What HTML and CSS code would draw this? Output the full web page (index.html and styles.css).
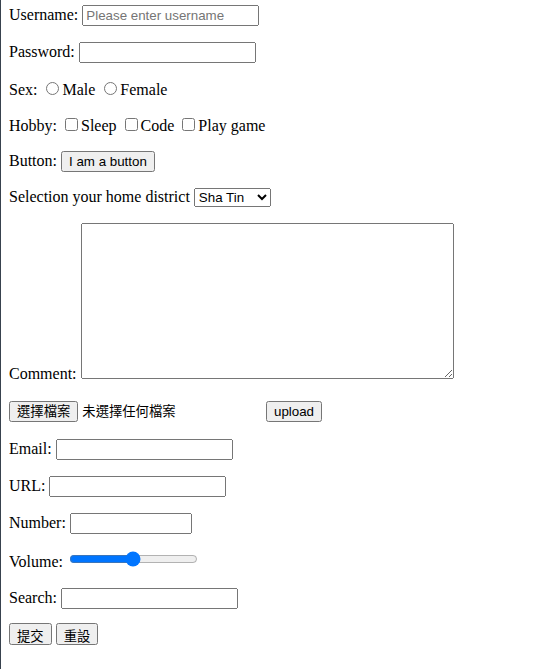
FILE: index.html
```html
<!DOCTYPE html>
<html lang="zh-Hant">
<head>
<meta charset="utf-8">
<title>Form</title>
<link rel="stylesheet" href="styles.css">
</head>
<body>
<form class="form">
  <p class="row first">Username: <input class="field" type="text" placeholder="Please enter username"></p>
  <p class="row">Password: <input class="field" type="password"></p>
  <p class="row">Sex: <input class="radio" type="radio" name="sex" id="male"><label for="male">Male</label> <input class="radio" type="radio" name="sex" id="female"><label for="female">Female</label></p>
  <p class="row">Hobby: <input class="check" type="checkbox" id="sleep"><label for="sleep">Sleep</label> <input class="check" type="checkbox" id="code"><label for="code">Code</label> <input class="check" type="checkbox" id="game"><label for="game">Play game</label></p>
  <p class="row">Button: <input class="btn" type="button" value="I am a button"></p>
  <p class="row">Selection your home district <select class="select"><option>Sha Tin</option><option>Tai Po</option><option>Yuen Long</option></select></p>
  <p class="row">Comment: <textarea class="comment"></textarea></p>
  <p class="row file-row"><span class="file"><button type="button" class="btn cjk-btn file-btn">選擇檔案</button><span class="file-text">未選擇任何檔案</span></span> <input class="btn" type="button" value="upload"></p>
  <p class="row">Email: <input class="field" type="email"></p>
  <p class="row">URL: <input class="field" type="url"></p>
  <p class="row number-row">Number: <input class="field number" type="number"></p>
  <p class="row volume">Volume: <input class="range" type="range" min="0" max="100" value="50"></p>
  <p class="row search-row">Search: <input class="field" type="search"></p>
  <p class="row submit-row"><input class="btn cjk-btn" type="submit" value="提交"> <input class="btn cjk-btn" type="reset" value="重設"></p>
</form>
</body>
</html>
```
FILE: styles.css
```css
html {
  border-left: 1px solid #38424e;
  background: #ffffff;
}
body {
  margin: 0 8px 8px 8px;
  font-family: "Liberation Serif", "Noto Sans CJK TC", serif;
  font-size: 16px;
  color: #000000;
}
.form {
  margin: 0;
}
.row {
  margin: 16px 0;
}
.row.first {
  margin-top: 5px;
}
.field,
.btn,
.select,
.file-text {
  font-family: "Liberation Sans", "Noto Sans CJK TC", sans-serif;
  font-size: 13.333px;
}
.field {
  box-sizing: border-box;
  width: 177px;
  height: 21px;
}
.number {
  width: 122px;
}
.select {
  width: 77px;
}
.comment {
  box-sizing: border-box;
  width: 373px;
  height: 156px;
}
.file {
  display: inline-block;
  width: 253px;
}
.file-text {
  margin-left: 4px;
  line-height: 1;
}
.cjk-btn {
  box-sizing: border-box;
  height: 22px;
  line-height: 1;
  padding-top: 1px;
  padding-bottom: 1px;
}
.file-btn {
  margin: 0;
  height: 21px;
}
.row.file-row {
  margin-top: 18px;
  margin-bottom: 17px;
}
.row.number-row {
  margin-bottom: 15px;
}
.row.volume {
  margin-top: 0;
  margin-bottom: 17px;
}
.row.search-row {
  margin-bottom: 14px;
}
.row.submit-row {
  margin-top: 0;
}
```
